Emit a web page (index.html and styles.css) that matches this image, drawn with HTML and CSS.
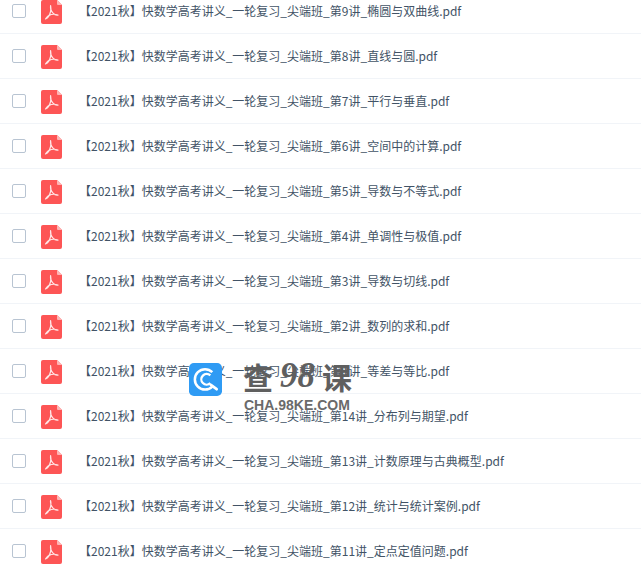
FILE: index.html
```html
<!DOCTYPE html>
<html lang="zh">
<head>
<meta charset="utf-8">
<title>文件列表</title>
<link rel="stylesheet" href="styles.css">
</head>
<body>
<svg class="defs" width="0" height="0" aria-hidden="true">
  <symbol id="pdf" viewBox="0 0 21 24">
    <path d="M2 0H16L21 5V22a2 2 0 0 1-2 2H2a2 2 0 0 1-2-2V2a2 2 0 0 1 2-2Z" fill="#fd5555"/>
    <path d="M16 0L21 5H17a1 1 0 0 1-1-1Z" fill="#feb5b5"/>
    <path d="M9.600 5.500C9.200 8.500 10 11 12 13.200C13.400 14.700 15.300 15.500 17 15.100C15.300 14.400 12.700 14 10.300 14.500C7.800 15 6 16.500 4.500 19C7.200 17.800 8.900 14.500 9.600 11.500C10 9.500 10 7.500 9.600 5.500Z" fill="none" stroke="#fff" stroke-opacity=".85" stroke-width="1.200" stroke-linejoin="round"/>
  </symbol>
</svg>
<main class="page">
  <ul class="list">
    <li class="row"><span class="check"></span><svg class="icon"><use href="#pdf"/></svg><span class="name">【2021秋】快数学高考讲义_一轮复习_尖端班_第9讲_椭圆与双曲线.pdf</span></li>
    <li class="row"><span class="check"></span><svg class="icon"><use href="#pdf"/></svg><span class="name">【2021秋】快数学高考讲义_一轮复习_尖端班_第8讲_直线与圆.pdf</span></li>
    <li class="row"><span class="check"></span><svg class="icon"><use href="#pdf"/></svg><span class="name">【2021秋】快数学高考讲义_一轮复习_尖端班_第7讲_平行与垂直.pdf</span></li>
    <li class="row"><span class="check"></span><svg class="icon"><use href="#pdf"/></svg><span class="name">【2021秋】快数学高考讲义_一轮复习_尖端班_第6讲_空间中的计算.pdf</span></li>
    <li class="row"><span class="check"></span><svg class="icon"><use href="#pdf"/></svg><span class="name">【2021秋】快数学高考讲义_一轮复习_尖端班_第5讲_导数与不等式.pdf</span></li>
    <li class="row"><span class="check"></span><svg class="icon"><use href="#pdf"/></svg><span class="name">【2021秋】快数学高考讲义_一轮复习_尖端班_第4讲_单调性与极值.pdf</span></li>
    <li class="row"><span class="check"></span><svg class="icon"><use href="#pdf"/></svg><span class="name">【2021秋】快数学高考讲义_一轮复习_尖端班_第3讲_导数与切线.pdf</span></li>
    <li class="row"><span class="check"></span><svg class="icon"><use href="#pdf"/></svg><span class="name">【2021秋】快数学高考讲义_一轮复习_尖端班_第2讲_数列的求和.pdf</span></li>
    <li class="row"><span class="check"></span><svg class="icon"><use href="#pdf"/></svg><span class="name">【2021秋】快数学高考讲义_一轮复习_尖端班_第1讲_等差与等比.pdf</span></li>
    <li class="row"><span class="check"></span><svg class="icon"><use href="#pdf"/></svg><span class="name">【2021秋】快数学高考讲义_一轮复习_尖端班_第14讲_分布列与期望.pdf</span></li>
    <li class="row"><span class="check"></span><svg class="icon"><use href="#pdf"/></svg><span class="name">【2021秋】快数学高考讲义_一轮复习_尖端班_第13讲_计数原理与古典概型.pdf</span></li>
    <li class="row"><span class="check"></span><svg class="icon"><use href="#pdf"/></svg><span class="name">【2021秋】快数学高考讲义_一轮复习_尖端班_第12讲_统计与统计案例.pdf</span></li>
    <li class="row"><span class="check"></span><svg class="icon"><use href="#pdf"/></svg><span class="name">【2021秋】快数学高考讲义_一轮复习_尖端班_第11讲_定点定值问题.pdf</span></li>
  </ul>
  <div class="mark">
    <svg class="logo" viewBox="0 0 34 34" aria-hidden="true">
      <rect width="34" height="34" rx="5" fill="#2f9bf4"/>
      <path d="M24 9.500A10.500 10.500 0 1 0 24 24.300" fill="none" stroke="#fff" stroke-width="2.600"/>
      <path d="M22 12.800a5.500 5.500 0 1 0 0 8" fill="none" stroke="#fff" stroke-width="2.400"/>
      <path d="M22.500 22.500l6 4.500" stroke="#fff" stroke-width="2.800" stroke-linecap="round"/>
    </svg>
    <div class="brand">
      <div class="brand-title"><span>查</span><i>98</i><span>课</span></div>
      <div class="brand-url">CHA.98KE.COM</div>
    </div>
  </div>
</main>
</body>
</html>
```

FILE: styles.css
```css
html, body {
  margin: 0;
  padding: 0;
  background: #fff;
}
.defs {
  position: absolute;
}
.page {
  position: relative;
  height: 568px;
  overflow: hidden;
}
.list {
  list-style: none;
  margin: -11px 0 0;
  padding: 0;
}
.row {
  display: flex;
  align-items: center;
  box-sizing: border-box;
  height: 45px;
  padding-left: 12px;
  border-bottom: 1px solid #f1f4f8;
}
.check {
  box-sizing: border-box;
  flex: none;
  width: 14px;
  height: 14px;
  border: 1px solid #b8c4d2;
  border-radius: 2px;
  background: #fff;
}
.icon {
  flex: none;
  width: 21px;
  height: 24px;
  margin-left: 15px;
  margin-top: 2px;
}
.name {
  margin-left: 17px;
  font: 12px/20px "Noto Sans CJK SC", "Noto Sans", sans-serif;
  color: #425366;
  white-space: nowrap;
}
.mark {
  position: absolute;
  left: 189px;
  top: 360px;
  display: flex;
  gap: 21px;
}
.logo {
  flex: none;
  width: 33px;
  height: 33px;
  margin-top: 3px;
}
.brand {
  display: flex;
  flex-direction: column;
  width: 109px;
  color: #5f5f5f;
}
.brand-title {
  display: flex;
  justify-content: space-between;
  align-items: center;
  height: 32px;
  font: 700 30px/32px "Noto Sans CJK SC", sans-serif;
  white-space: nowrap;
}
.brand-title i {
  font: italic 700 35px/32px "Liberation Serif", serif;
}
.brand-url {
  font: 700 14px/16px "Liberation Sans", sans-serif;
  color: #6a6a6a;
  margin-top: 5px;
  padding-left: 1px;
  white-space: nowrap;
}
```
